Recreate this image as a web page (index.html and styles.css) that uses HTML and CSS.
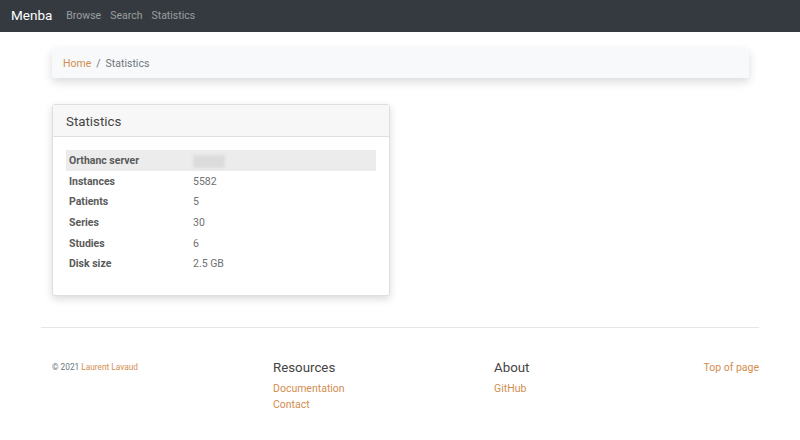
FILE: index.html
```html
<!DOCTYPE html>
<html>
<head>
<meta charset="utf-8">
<link rel="stylesheet" href="styles.css">
</head>
<body>
<nav class="navbar">
  <a class="brand" href="#">Menba</a>
  <a class="nav-link" href="#">Browse</a>
  <a class="nav-link" href="#">Search</a>
  <a class="nav-link" href="#">Statistics</a>
</nav>
<main class="container">
  <div class="breadcrumb">
    <a href="#" class="link">Home</a><span class="sep">/</span><span class="current">Statistics</span>
  </div>
  <div class="card">
    <div class="card-header">Statistics</div>
    <div class="card-body">
      <table class="stats">
        <tr class="striped"><th>Orthanc server</th><td><span class="blur"></span></td></tr>
        <tr><th>Instances</th><td>5582</td></tr>
        <tr><th>Patients</th><td>5</td></tr>
        <tr><th>Series</th><td>30</td></tr>
        <tr><th>Studies</th><td>6</td></tr>
        <tr><th>Disk size</th><td>2.5 GB</td></tr>
      </table>
    </div>
  </div>
  <footer class="footer">
    <div class="col copy">© 2021 <a href="#" class="link">Laurent Lavaud</a></div>
    <div class="col res">
      <h5>Resources</h5>
      <a href="#" class="link">Documentation</a>
      <a href="#" class="link">Contact</a>
    </div>
    <div class="col about">
      <h5>About</h5>
      <a href="#" class="link">GitHub</a>
    </div>
    <div class="col top"><a href="#" class="link">Top of page</a></div>
  </footer>
</main>
</body>
</html>
```
FILE: styles.css
```css
* { box-sizing: border-box; }
body {
  margin: 0;
  font-family: Roboto, "Liberation Sans", sans-serif;
  color: #212529;
  background: #fff;
}
a { text-decoration: none; }
.navbar {
  height: 32px;
  background: #343a40;
  display: flex;
  align-items: center;
  padding: 0 11px 2px 11px;
}
.brand {
  color: #fff;
  font-size: 13.5px;
  margin-right: 14px;
}
.nav-link {
  color: rgba(255,255,255,0.5);
  font-size: 10.5px;
  margin-right: 9px;
}
.container {
  width: 718px;
  margin: 0 auto;
  padding-top: 16px;
}
.breadcrumb {
  margin: 0 10px 0 11px;
  height: 30px;
  background: #f8f9fa;
  box-shadow: 0 4px 10px rgba(0,0,0,0.15);
  display: flex;
  align-items: center;
  padding: 0 11px;
  font-size: 10.5px;
  border-radius: 2px;
}
.link { color: #d28d50; }
.sep { color: #6c757d; margin: 0 5px; }
.current { color: #6c757d; }
.card {
  margin: 26px 0 0 11px;
  width: 338px;
  height: 192px;
  border: 1px solid #dfdfdf;
  border-radius: 3px;
  box-shadow: 0 3px 8px rgba(0,0,0,0.15);
  background: #fff;
}
.card-header {
  height: 32px;
  background: #f7f7f7;
  border-bottom: 1px solid #dfdfdf;
  padding: 1px 13px 0 13px;
  display: flex;
  align-items: center;
  font-size: 13.3px;
  color: #444;
}
.card-body { padding: 13px 13px 0 13px; }
.stats {
  width: 100%;
  border-collapse: collapse;
  font-size: 10.5px;
}
.stats th, .stats td {
  height: 20.6px;
  padding: 1px 3px 0 3px;
  text-align: left;
  vertical-align: middle;
}
.stats th { font-weight: 700; width: 124px; color: #5a5a5a; }
.stats td { color: #707070; }
.striped { background: #ececec; }
.blur {
  display: inline-block;
  width: 32px;
  height: 13px;
  background: #dcdcdc;
  filter: blur(1.5px);
  vertical-align: middle;
}
.footer {
  margin-top: 31px;
  border-top: 1px solid #e5e5e5;
  display: flex;
  padding: 32px 0 0 11px;
}
.col { display: flex; flex-direction: column; }
.copy { display: block; width: 221px; font-size: 8.3px; color: #6c757d; padding-top: 2px; }
.res { width: 221px; }
.about { width: 200px; }
.top { margin-left: auto; font-size: 10.5px; padding-top: 1px; }
h5 {
  margin: 0 0 6px 0;
  font-size: 13.3px;
  font-weight: 400;
  color: #444;
}
.res .link, .about .link { font-size: 10.5px; line-height: 16px; }
```
